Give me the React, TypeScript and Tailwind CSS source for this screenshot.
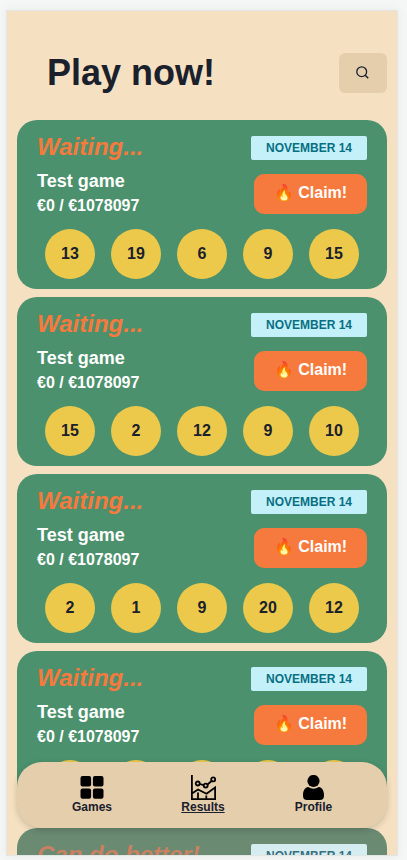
import React from "react";

type Game = { status: string; numbers: number[]; finished?: boolean };

const games: Game[] = [
  { status: "Waiting...", numbers: [13, 19, 6, 9, 15] },
  { status: "Waiting...", numbers: [15, 2, 12, 9, 10] },
  { status: "Waiting...", numbers: [2, 1, 9, 20, 12] },
  { status: "Waiting...", numbers: [7, 3, 11, 5, 18] },
  { status: "Can do better!", numbers: [4, 8, 16, 10, 2], finished: true },
];

function GameCard({ game }: { game: Game }) {
  return (
    <article className={`h-[169px] shrink-0 rounded-[20px] px-5 ${game.finished ? "bg-[#6a8a72]" : "bg-[#4b916d]"}`}>
      <div className="flex h-[109px] justify-between">
        <div className="pt-[11px] font-bold whitespace-nowrap text-white">
          <h2 className={`text-2xl leading-8 italic ${game.finished ? "text-[#c98162]" : "text-[#f6793d]"}`}>
            {game.status}
          </h2>
          <p className="mt-1 text-[18px] leading-7">Test game</p>
          <p className="text-base leading-[22px]">€0 / €1078097</p>
        </div>
        <div className="flex flex-col items-end pt-4">
          <span
            className={`flex h-6 w-[116px] items-center justify-center rounded-[2px] text-xs font-bold whitespace-nowrap ${game.finished ? "bg-[#d5edf1] text-[#39707d]" : "bg-[#c4f1f9] text-[#086f83]"}`}
          >
            NOVEMBER 14
          </span>
          <button className="mt-3.5 flex h-10 w-[113px] items-center justify-center rounded-[10px] bg-[#f6793d] pb-0.5 text-base font-bold whitespace-pre text-white">
            🔥 Claim!
          </button>
        </div>
      </div>
      <div className="flex gap-4 pl-2">
        {game.numbers.map((n, i) => (
          <span
            key={i}
            className="flex size-[50px] items-center justify-center rounded-full bg-[#ecc94b] text-base font-bold text-[#1a202c]"
          >
            {n}
          </span>
        ))}
      </div>
    </article>
  );
}

function GridIcon() {
  return (
    <svg width="25" height="25" viewBox="0 0 25 25">
      <rect x=".5" y="1" width="10.6" height="10.4" rx="2" />
      <rect x="12.9" y="1" width="10.6" height="10.4" rx="2" />
      <rect x=".5" y="13.4" width="10.6" height="10.4" rx="2" />
      <rect x="12.9" y="13.4" width="10.6" height="10.4" rx="2" />
    </svg>
  );
}

function ChartIcon() {
  return (
    <svg width="25" height="25" viewBox="0 0 25 25" fill="none" stroke="#000" strokeWidth="1.8">
      <path d="M.9 0V24.1H24.1V12.5L15.5 18.8L7 14.5L1 18.5M7 17.5V24M15.3 20.5V24" />
      <path d="M8.7 9L12.7 10.1M16.8 9.3L20.6 6" />
      <circle cx="6.7" cy="8.5" r="2" />
      <circle cx="14.7" cy="10.6" r="2" />
      <circle cx="22.2" cy="4.4" r="2" />
    </svg>
  );
}

function PersonIcon() {
  return (
    <svg width="25" height="25" viewBox="0 0 25 25">
      <circle cx="12.5" cy="6" r="6.1" />
      <path d="M7.2 12.1Q12.5 15.6 17.8 12.1C21.5 12.5 23 16.2 23 20.5C23 23.7 21.7 25 18.8 25H6.2C3.3 25 2 23.7 2 20.5C2 16.2 3.5 12.5 7.2 12.1Z" />
    </svg>
  );
}

export default function App() {
  return (
    <div className="h-[860px] w-full overflow-hidden bg-[#f5f7f7] pt-2.5 pl-1.5 font-['Liberation_Sans',Arial,sans-serif]">
      <main className="relative h-[846px] w-[392px] overflow-hidden border border-[#e2e6e4] bg-[#f5e1c1] px-2.5 shadow-[0_0_10px_rgba(0,0,0,0.06)]">
        <header className="flex h-[109px] items-center justify-between pt-[15px] pl-[30px]">
          <h1 className="mb-0.5 text-4xl leading-[43px] font-bold text-[#1a202c]">Play now!</h1>
          <button aria-label="Search" className="flex h-10 w-12 items-center justify-center rounded-md bg-[#e5ceac]">
            <svg width="14" height="14" viewBox="0 0 14 14" fill="none" stroke="#1a202c" strokeWidth="1.3">
              <circle cx="5.7" cy="5.7" r="4.9" />
              <path d="M9.2 9.2L12.2 12.2" strokeWidth="1.5" />
            </svg>
          </button>
        </header>
        <section className="flex flex-col gap-2">
          {games.map((game, i) => (
            <GameCard key={i} game={game} />
          ))}
        </section>
        <nav className="absolute top-[751px] left-2.5 h-[66px] w-[370px] rounded-[25px] bg-[#e5ceac] text-xs leading-4 font-bold text-[#1a202c] shadow-[0_2px_6px_rgba(0,0,0,0.18)]">
          <div className="flex pt-[13px] pl-5">
            <a className="flex w-[110px] flex-col items-center">
              <GridIcon />
              <span className="-mt-px">Games</span>
            </a>
            <a className="flex w-[112px] flex-col items-center">
              <ChartIcon />
              <span className="-mt-px underline">Results</span>
            </a>
            <a className="flex w-[109px] flex-col items-center">
              <PersonIcon />
              <span className="-mt-px">Profile</span>
            </a>
          </div>
        </nav>
      </main>
    </div>
  );
}
